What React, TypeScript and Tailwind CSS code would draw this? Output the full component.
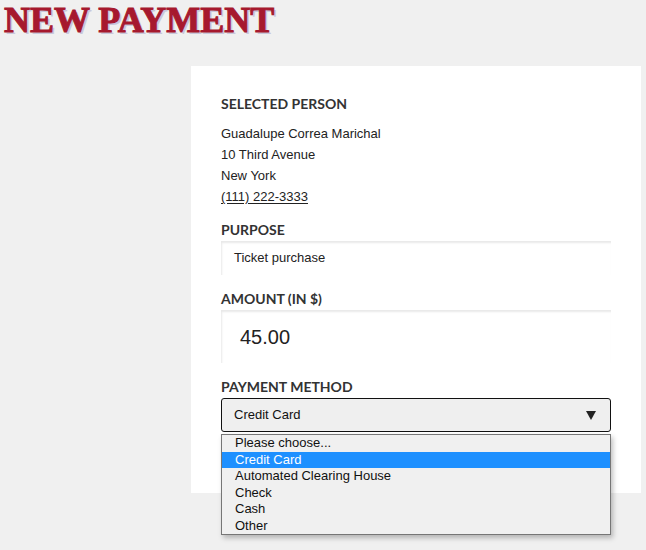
import React from "react";

const options = [
  "Please choose...",
  "Credit Card",
  "Automated Clearing House",
  "Check",
  "Cash",
  "Other",
];

function Label({ children }: { children: React.ReactNode }) {
  return (
    <div
      className="h-[20px] leading-[20px] text-[14px] font-bold text-[#333333] mb-px"
      style={{ fontFamily: "Lato, 'Liberation Sans', sans-serif" }}
    >
      {children}
    </div>
  );
}

export default function App() {
  return (
    <div
      className="min-h-[550px] bg-[#f0f0f0] overflow-hidden"
      style={{ fontFamily: "'Liberation Sans', Arial, sans-serif" }}
    >
      <h1
        className="pl-[4px] h-[38px] leading-[40px] text-[36px] font-bold text-[#a6192e] [text-shadow:2px_2px_0_#c8c8dc] [-webkit-text-stroke:1px_#a6192e] whitespace-nowrap"
        style={{ fontFamily: "'Liberation Serif', serif" }}
      >
        NEW PAYMENT
      </h1>
      <div className="ml-[191px] mt-[28px] w-[450px] bg-white pt-[28px] pb-[61px] px-[30px]">
        <Label>SELECTED PERSON</Label>
        <div className="mt-[9px] text-[13px] leading-[21px] text-[#222]">
          <div>Guadalupe Correa Marichal</div>
          <div>10 Third Avenue</div>
          <div>New York</div>
          <div>
            <span className="underline underline-offset-2">(111) 222-3333</span>
          </div>
        </div>

        <div className="mt-[13px]">
          <Label>PURPOSE</Label>
          <div className="h-[34px] w-[390px] flex items-center pl-[13px] text-[13px] text-[#222] shadow-[inset_1px_2px_2px_rgba(0,0,0,0.09)]">
            Ticket purchase
          </div>
        </div>

        <div className="mt-[14px]">
          <Label>AMOUNT (IN $)</Label>
          <div className="h-[53px] w-[390px] flex items-center pl-[19px] text-[20px] text-[#222] shadow-[inset_1px_2px_2px_rgba(0,0,0,0.09)]">
            45.00
          </div>
        </div>

        <div className="mt-[14px]">
          <Label>PAYMENT METHOD</Label>
          <div className="relative w-[390px]">
            <div className="h-[34px] flex items-center justify-between pl-[12px] pr-[14px] bg-[#efefef] border border-[#111] rounded-[3px] text-[13px] text-[#111]">
              <span>Credit Card</span>
              <svg width="10" height="9" viewBox="0 0 10 9">
                <polygon points="0,0 10,0 5,9" fill="#222" />
              </svg>
            </div>
            <div className="absolute left-0 top-[36px] w-[390px] bg-[#f0f0f0] border border-[#767676] shadow-[2px_3px_5px_rgba(0,0,0,0.25)] text-[13px] text-[#111]">
              {options.map((o) => (
                <div
                  key={o}
                  className={
                    o === "Credit Card"
                      ? "h-[16.5px] leading-[16.5px] pl-[13px] bg-[#1e90ff] text-white"
                      : "h-[16.5px] leading-[16.5px] pl-[13px]"
                  }
                >
                  {o}
                </div>
              ))}
            </div>
          </div>
        </div>
      </div>
    </div>
  );
}
